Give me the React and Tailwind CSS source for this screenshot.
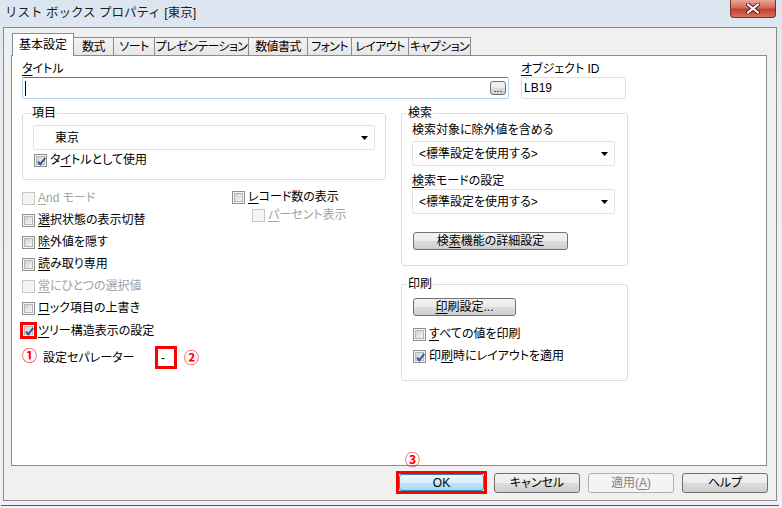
import React from 'react';

const U = ({ children }) => <span className="underline underline-offset-[2px]">{children}</span>;

const Check = ({ checked = false, disabled = false, className = '' }) => (
    <span className={`relative flex h-[13px] w-[13px] shrink-0 items-center justify-center border ${disabled ? 'border-[#c6c6c6] bg-[#f7f7f7]' : 'border-[#8e8f8f] bg-[#f4f4f4]'} ${className}`}>
        <span className={`h-[9px] w-[9px] ${disabled ? 'bg-[#f4f4f4]' : 'border border-[#b3b7bd] bg-[linear-gradient(135deg,#cfd2d6,#f6f6f6)]'}`} />
        {checked && (
            <svg className="absolute left-[1px] top-[1px]" width="11" height="11" viewBox="0 0 11 11">
                <path d="M2 5.5 L4.3 8.3 L9.2 1.8" fill="none" stroke="#3b5596" strokeWidth="2" />
            </svg>
        )}
    </span>
);

const CheckRow = ({ checked, disabled, children, className = '', boxClass = '' }) => (
    <div className={`flex items-center gap-[3px] ${disabled ? 'text-[#a3a3a3]' : ''} ${className}`}>
        <Check checked={checked} disabled={disabled} className={boxClass} />
        <span className="whitespace-nowrap">{children}</span>
    </div>
);

const Combo = ({ text, className = '' }) => (
    <div className={`flex h-[25px] items-center rounded-[2px] border border-[#dfe3e9] bg-white pr-[6px] ${className}`}>
        <span className="flex-1 whitespace-nowrap">{text}</span>
        <svg width="7" height="4" viewBox="0 0 7 4"><path d="M0 0H7L3.5 4Z" fill="#000" /></svg>
    </div>
);

const Btn = ({ children, className = '', kind = 'normal' }) => {
    const look = {
        normal: 'border-[#707070] bg-[linear-gradient(#f2f2f2,#ebebeb_50%,#dddddd_50%,#cfcfcf)]',
        primary: 'border-[#3c7fb1] bg-[linear-gradient(#eaf6fd,#d9f0fc_50%,#bee6fd_50%,#a7d9f5)]',
        disabled: 'border-[#adb2b5] bg-[#f4f4f4] text-[#838383]',
    }[kind];
    return (
        <div className={`flex items-center justify-center whitespace-nowrap rounded-[3px] border ${look} ${className}`}>
            {children}
        </div>
    );
};

const tabs = [
    { label: '数式', w: 'w-[41px]' },
    { label: 'ソート', w: 'w-[42px]' },
    { label: 'プレゼンテーション', w: 'w-[95px]' },
    { label: '数値書式', w: 'w-[60px]' },
    { label: 'フォント', w: 'w-[45px]' },
    { label: 'レイアウト', w: 'w-[58px]' },
    { label: 'キャプション', w: 'w-[63px]' },
];

export default function App() {
    return (
        <div className="relative h-[508px] w-[782px] overflow-hidden bg-[linear-gradient(180deg,#dbe5ef,#e8eef4_20%,#eef2f6)] font-['Liberation_Sans','Noto_Sans_CJK_JP',sans-serif] text-[12px] leading-[14px] text-black [font-feature-settings:'palt']">
            {/* title bar */}
            <div className="flex h-[27px] items-start">
                <span className="ml-[5px] mt-[6px] text-[12.5px] leading-[14px] text-[#1b1b1b] [font-feature-settings:normal]">リスト ボックス プロパティ [東京]</span>
                <div className="ml-auto mr-[6px] flex h-[18px] w-[46px] items-center justify-center rounded-b-[4px] border border-t-0 border-[#7a2e24] bg-[linear-gradient(#e9a799,#d46a58_45%,#c2402d_55%,#d9705e)]">
                    <svg width="14" height="11" viewBox="0 0 14 11">
                        <path d="M2 1.5L12 9.5M12 1.5L2 9.5" stroke="#4a1d17" strokeWidth="4" strokeLinecap="square" />
                        <path d="M2 1.5L12 9.5M12 1.5L2 9.5" stroke="#ffffff" strokeWidth="2" strokeLinecap="square" />
                    </svg>
                </div>
            </div>

            {/* client area */}
            <div className="ml-[3px] h-[474px] w-[774px] border border-[#8a8a8a] bg-[#f0f0f0]">
                {/* tabs */}
                <div className="ml-[8px] mt-[5px] flex h-[22px] items-end">
                    <div className="relative z-10 -mb-px flex h-[23px] w-[62px] items-center justify-center border border-b-0 border-[#898c95] bg-white">
                        基本設定
                    </div>
                    {tabs.map((t) => (
                        <div key={t.label} className={`-ml-px flex h-[18px] items-center justify-center whitespace-nowrap border border-b-0 border-[#898c95] bg-[linear-gradient(#f4f4f4,#e6e6e6)] tracking-[-0.6px] ${t.w}`}>
                            {t.label}
                        </div>
                    ))}
                </div>

                {/* tab panel */}
                <div className="ml-[7px] h-[411px] w-[756px] border border-[#898c95] bg-white pl-[10px] pt-[6px]">
                    <div className="flex gap-[12px]">
                        <div className="w-[487px]">
                            <div className="h-[14px]"><U>タ</U>イトル</div>
                            <div className="mt-[1px] flex h-[22px] items-center rounded-[2px] border border-[#b6d0e8] border-t-[#3f7cb0]">
                                <span className="ml-[2px] h-[15px] w-px bg-black" />
                                <Btn className="ml-auto mr-[2px] h-[14px] w-[16px] items-end text-[10px] leading-[10px]">...</Btn>
                            </div>
                        </div>
                        <div className="w-[105px]">
                            <div className="h-[14px]"><U>オ</U>ブジェクト ID</div>
                            <div className="mt-[1px] flex h-[22px] items-center rounded-[2px] border border-[#dde1e7] pl-[2px]">LB19</div>
                        </div>
                    </div>

                    <div className="mt-[7px] flex gap-[15px]">
                        {/* left column */}
                        <div className="w-[364px]">
                            <fieldset className="rounded-[3px] border border-[#d5dfe5] px-[10px] pb-[11px]">
                                <legend className="-ml-[2px] px-[1px] leading-[14px]">項目</legend>
                                <Combo className="mt-[5px] pl-[21px]" text="東京" />
                                <CheckRow checked className="ml-[1px] mt-[2px] h-[16px] gap-[2px]">タ<U>イ</U>トルとして使用</CheckRow>
                            </fieldset>

                            <div className="mt-[7px] flex">
                                <div className="w-[210px]">
                                    <CheckRow disabled className="h-[22px]"><U>A</U>nd モード</CheckRow>
                                    <CheckRow className="h-[22px]"><U>選</U>択状態の表示切替</CheckRow>
                                    <CheckRow className="h-[22px]"><U>除</U>外値を隠す</CheckRow>
                                    <CheckRow className="h-[22px]"><U>読</U>み取り専用</CheckRow>
                                    <CheckRow disabled className="h-[22px]"><U>常</U>にひとつの選択値</CheckRow>
                                    <CheckRow className="h-[22px]"><U>ロ</U>ック項目の上書き</CheckRow>
                                    <CheckRow checked className="h-[23px]" boxClass="outline-[3px] outline-[#ff0000] -outline-offset-1 outline">
                                        <U>ツ</U>リー構造表示の設定
                                    </CheckRow>
                                </div>
                                <div className="mt-[1px]">
                                    <CheckRow className="h-[18px]"><U>レ</U>コード数の表示</CheckRow>
                                    <CheckRow disabled className="ml-[20px] h-[18px]"><U>パ</U>ーセント表示</CheckRow>
                                </div>
                            </div>

                            <div className="mt-[4px] flex h-[23px] items-center">
                                <span className="mb-[4px] w-[21px] text-[15px] font-bold leading-none text-[#ff0000]">①</span>
                                <span className="w-[112px]">設定セパレーター</span>
                                <div className="flex h-[23px] w-[22px] items-center border-[3px] border-[#ff0000] bg-white pl-[3px] text-[12px]">-</div>
                                <span className="ml-[7px] text-[15px] font-bold leading-none text-[#ff0000]">②</span>
                            </div>
                        </div>

                        {/* right column */}
                        <div className="w-[227px]">
                            <fieldset className="rounded-[3px] border border-[#d5dfe5] pb-[15px] pl-[10px] pr-[12px]">
                                <legend className="-ml-[5px] px-[1px] leading-[14px]">検索</legend>
                                <div className="mt-[3px] h-[14px] whitespace-nowrap">検索対象に除外値を含める</div>
                                <Combo className="mt-[4px] pl-[6px]" text="<標準設定を使用する>" />
                                <div className="mt-[8px] h-[14px] whitespace-nowrap"><U>検</U>索モードの設定</div>
                                <Combo className="mt-[1px] pl-[6px]" text="<標準設定を使用する>" />
                                <Btn className="ml-[1px] mt-[18px] h-[18px] w-[155px]">検<U>索</U>機能の詳細設定</Btn>
                            </fieldset>

                            <fieldset className="mt-[11px] rounded-[3px] border border-[#d5dfe5] pb-[16px] pl-[10px] pr-[12px]">
                                <legend className="-ml-[5px] px-[1px] leading-[14px]">印刷</legend>
                                <Btn className="ml-[1px] mt-[7px] h-[18px] w-[103px]"><U>印</U>刷設定...</Btn>
                                <CheckRow className="ml-[1px] mt-[10px] h-[16px] gap-[2px]"><U>す</U>べての値を印刷</CheckRow>
                                <CheckRow checked className="ml-[1px] mt-[6px] h-[16px] gap-[2px]">印<U>刷</U>時にレイアウトを適用</CheckRow>
                            </fieldset>
                        </div>
                    </div>
                </div>

                {/* dialog buttons */}
                <div className="mt-[5px] flex items-start justify-end gap-[8px] pr-[8px]">
                    <div className="relative -mr-px h-[23px] w-[91px] border-[3px] border-[#ff0000]">
                        <span className="absolute -top-[22px] left-[6px] text-[15px] font-bold leading-none text-[#ff0000]">③</span>
                        <Btn kind="primary" className="h-full w-full">OK</Btn>
                    </div>
                    <Btn className="mt-[2px] h-[20px] w-[86px]">キャンセル</Btn>
                    <Btn kind="disabled" className="mt-[2px] h-[20px] w-[86px]">適用(<U>A</U>)</Btn>
                    <Btn className="mt-[2px] h-[20px] w-[86px]">ヘルプ</Btn>
                </div>
            </div>
            <div className="ml-[1px] mt-[4px] h-px w-[778px] bg-[#5a5a5a]" />
        </div>
    );
}
